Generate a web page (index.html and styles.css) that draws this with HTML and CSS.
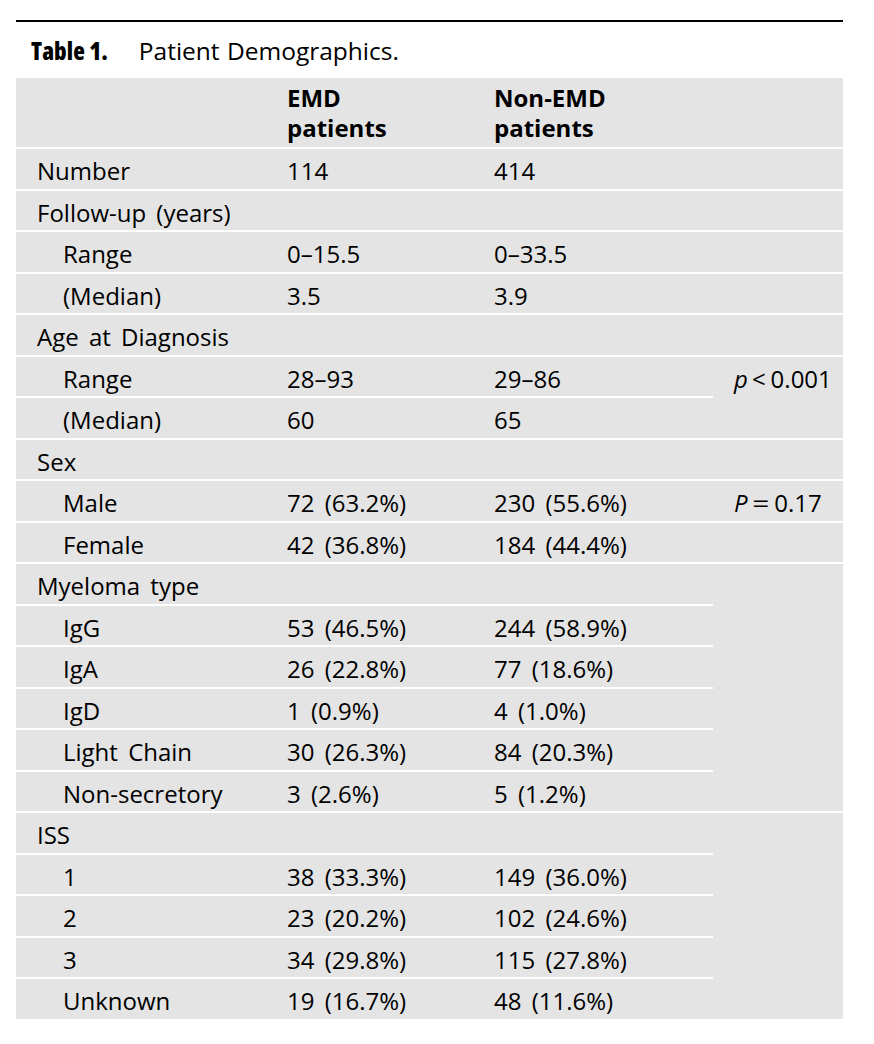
FILE: index.html
```html
<!DOCTYPE html>
<html lang="en">
<head>
<meta charset="utf-8">
<title>Table 1. Patient Demographics.</title>
<link rel="stylesheet" href="styles.css">
</head>
<body>
<div class="page">
  <div class="rule"></div>
  <h1 class="caption"><span class="label">Table 1.</span><span class="title">Patient Demographics.</span></h1>
  <table class="demo">
    <colgroup>
      <col class="c-label">
      <col class="c-emd">
      <col class="c-non">
      <col class="c-p">
    </colgroup>
    <thead>
      <tr class="head">
        <th></th>
        <th>EMD<br>patients</th>
        <th>Non-EMD<br>patients</th>
        <th></th>
      </tr>
    </thead>
    <tbody>
      <tr><td>Number</td><td>114</td><td>414</td><td></td></tr>
      <tr><td>Follow-up (years)</td><td></td><td></td><td></td></tr>
      <tr><td class="sub">Range</td><td>0–15.5</td><td>0–33.5</td><td></td></tr>
      <tr><td class="sub">(Median)</td><td>3.5</td><td>3.9</td><td></td></tr>
      <tr><td>Age at Diagnosis</td><td></td><td></td><td></td></tr>
      <tr><td class="sub">Range</td><td>28–93</td><td>29–86</td><td class="pval" rowspan="2"><i>p</i><span class="op">&lt;</span>0.001</td></tr>
      <tr><td class="sub">(Median)</td><td>60</td><td>65</td></tr>
      <tr><td>Sex</td><td></td><td></td><td></td></tr>
      <tr><td class="sub">Male</td><td>72 (63.2%)</td><td>230 (55.6%)</td><td class="pval"><i>P</i><span class="op eq">=</span>0.17</td></tr>
      <tr><td class="sub">Female</td><td>42 (36.8%)</td><td>184 (44.4%)</td><td></td></tr>
      <tr><td>Myeloma type</td><td></td><td></td><td rowspan="6"></td></tr>
      <tr><td class="sub">IgG</td><td>53 (46.5%)</td><td>244 (58.9%)</td></tr>
      <tr><td class="sub">IgA</td><td>26 (22.8%)</td><td>77 (18.6%)</td></tr>
      <tr><td class="sub">IgD</td><td>1 (0.9%)</td><td>4 (1.0%)</td></tr>
      <tr><td class="sub">Light Chain</td><td>30 (26.3%)</td><td>84 (20.3%)</td></tr>
      <tr><td class="sub">Non-secretory</td><td>3 (2.6%)</td><td>5 (1.2%)</td></tr>
      <tr><td>ISS</td><td></td><td></td><td rowspan="5"></td></tr>
      <tr><td class="sub">1</td><td>38 (33.3%)</td><td>149 (36.0%)</td></tr>
      <tr><td class="sub">2</td><td>23 (20.2%)</td><td>102 (24.6%)</td></tr>
      <tr><td class="sub">3</td><td>34 (29.8%)</td><td>115 (27.8%)</td></tr>
      <tr><td class="sub">Unknown</td><td>19 (16.7%)</td><td>48 (11.6%)</td></tr>
    </tbody>
  </table>
</div>
</body>
</html>
```
FILE: styles.css
```css
html, body {
  margin: 0;
  padding: 0;
  background: #ffffff;
}

body {
  font-family: "Open Sans", "Noto Sans", "DejaVu Sans", sans-serif;
  color: #000;
}

.page {
  width: 827px;
  padding: 20px 31px 0 16px;
}

.rule {
  height: 2px;
  background: #000;
}

.caption {
  margin: 0;
  height: 56px;
  padding-left: 15px;
  display: flex;
  align-items: center;
  font-weight: normal;
}

.caption .label {
  font-family: "Open Sans", "DejaVu Sans", sans-serif;
  font-stretch: 75%;
  font-weight: 800;
  font-size: 24px;
  letter-spacing: 0.1px;
  margin-right: 31px;
}

.caption .title {
  font-size: 24.5px;
  word-spacing: 1px;
}

.demo {
  width: 827px;
  border-collapse: separate;
  border-spacing: 0;
  background: #e4e4e4;
  font-size: 24px;
  line-height: 32px;
  table-layout: fixed;
}

.demo .c-label { width: 250px; }
.demo .c-emd { width: 207px; }
.demo .c-non { width: 240px; }
.demo .c-p { width: 130px; }

.demo th, .demo td {
  box-sizing: border-box;
  text-align: left;
}

.demo tr.head {
  height: 69px;
}

.demo th {
  font-weight: bold;
  vertical-align: top;
  padding: 5px 0 0 21px;
  line-height: 30px;
}

.demo tbody tr {
  height: 41.5px;
}

.demo td {
  vertical-align: top;
  border-top: 2px solid #ffffff;
  padding: 6px 0 0 21px;
  white-space: nowrap;
  word-spacing: 4px;
}

.demo td.sub {
  padding-left: 47px;
}

.demo td.pval i {
  font-style: italic;
}

.demo td.pval .op {
  display: inline-block;
  margin: 0 5px 0 4px;
}

.demo td.pval .op.eq {
  margin: 0 7px 0 6px;
  transform: scaleX(1.25);
}
```
